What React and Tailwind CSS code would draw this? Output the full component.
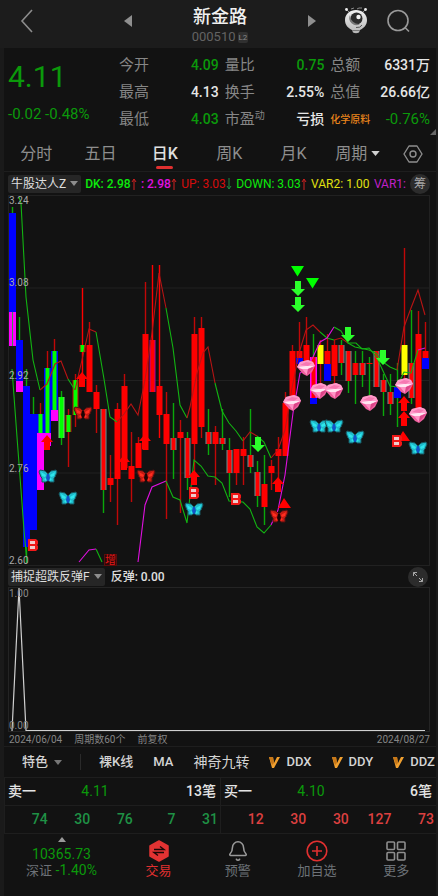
import React from "react";
import { Bell } from "lucide-react";

const RED = "#ff0000";
const GREEN = "#00ff00";
const BLUE = "#0000ff";
const PINK = "#ff00ff";
const YELLOW = "#ffff00";
const TEAL = "#5f9494";
const UP = "#c00808";
const DOWN = "#0aa80a";

// One entry per day: high, low, wick colour, then the body parts (top, bottom, fill, outline)
const candles = [
  [207, 346, DOWN, [213, 312, BLUE], [312, 346, PINK]],
  [317, 392, DOWN, [340, 381, BLUE], [381, 392, PINK]],
  [369, 563, DOWN, [386, 547, BLUE]],
  [397, 530, DOWN, [414, 530, BLUE]],
  [403, 490, UP, [414, 433, GREEN, BLUE], [433, 490, PINK]],
  [351, 450, UP, [368, 433, GREEN, BLUE], [433, 446, PINK]],
  [339, 421, UP, [351, 410, GREEN, BLUE], [410, 421, PINK]],
  [391, 445, DOWN, [397, 438, GREEN, "#7fd07f"]],
  [409, 467, UP, [415, 432, GREEN, UP]],
  [374, 427, UP, [380, 415, GREEN, UP]],
  [288, 378, RED, [345, 352, GREEN, UP]],
  [322, 392, UP, [345, 392, RED]],
  [385, 433, UP, [392, 409, RED]],
  [409, 513, DOWN, [409, 490, RED, TEAL]],
  [455, 502, UP, [478, 485, RED]],
  [403, 525, UP, [409, 479, RED]],
  [374, 468, UP, [386, 468, RED]],
  [432, 502, UP, [466, 479, RED]],
  [437, 468, UP, [443, 468, RED]],
  [282, 450, UP, [334, 450, RED]],
  [265, 392, RED, [340, 392, RED, "#b000a0"]],
  [265, 438, RED, [386, 415, RED]],
  [392, 519, UP, [414, 444, RED]],
  [403, 479, DOWN, [438, 450, RED, TEAL]],
  [420, 513, UP, [432, 438, RED]],
  [432, 490, DOWN, [438, 478, RED, TEAL]],
  [317, 480, UP, [334, 444, RED]],
  [317, 438, UP, [328, 427, RED]],
  [409, 455, DOWN, [432, 444, RED, TEAL]],
  [426, 485, UP, [432, 444, RED]],
  [409, 450, DOWN, [438, 444, RED, TEAL]],
  [438, 497, DOWN, [450, 473, RED, TEAL]],
  [449, 485, UP, [449, 473, RED]],
  [437, 485, UP, [449, 456, RED]],
  [409, 473, DOWN, [455, 467, RED, TEAL]],
  [461, 507, DOWN, [472, 496, RED, TEAL]],
  [455, 525, DOWN, [484, 507, RED]],
  [460, 490, UP, [466, 473, RED]],
  [437, 480, UP, [449, 456, RED]],
  [392, 456, UP, [403, 456, RED]],
  [345, 410, UP, [351, 400, RED]],
  [322, 364, UP, [351, 358, RED], [358, 364, BLUE]],
  [317, 365, UP, [345, 365, RED]],
  [334, 404, DOWN, [357, 398, RED, PINK], [398, 404, BLUE]],
  [340, 392, UP, [345, 364, YELLOW]],
  [334, 381, UP, [351, 364, RED], [364, 381, BLUE]],
  [340, 390, UP, [345, 376, RED]],
  [340, 375, DOWN, [345, 363, RED, TEAL]],
  [351, 393, DOWN, [351, 381, RED, TEAL]],
  [351, 404, DOWN, [363, 375, RED, UP]],
  [351, 387, DOWN, [363, 375, RED, TEAL]],
  [357, 400, DOWN, [363, 364, RED]],
  [351, 387, UP, [351, 387, RED, TEAL]],
  [374, 416, DOWN, [380, 392, RED, TEAL]],
  [374, 415, DOWN, [392, 404, RED, TEAL]],
  [363, 427, DOWN, [387, 398, BLUE]],
  [248, 385, UP, [345, 375, YELLOW]],
  [310, 404, DOWN, [363, 398, RED, TEAL]],
  [311, 416, UP, [334, 416, RED]],
  [322, 369, UP, [351, 358, RED], [358, 369, BLUE]],
];

const LINE_GREEN = "#12b412";
const LINE_RED = "#b81414";
const LINE_PINK = "#e010e0";

const curves = [
  [LINE_GREEN, "19,197 21,203 26,297 33,360 40,390"],
  [LINE_RED, "40,390 47,384 55,364 61,361 68,379"],
  [LINE_GREEN, "68,379 75,390"],
  [LINE_RED, "75,390 82,360 89,329 96,332"],
  [LINE_GREEN, "96,332 104,379 110,417 117,422"],
  [LINE_RED, "117,422 124,414 131,404 138,415 145,380 152,333 159,273 166,308"],
  [LINE_GREEN, "166,308 173,348 180,405 187,418"],
  [LINE_RED, "187,418 190,407 197,373 203,353 208,347 215,383"],
  [LINE_GREEN, "215,383 222,411 229,423 236,431 243,441"],
  [LINE_RED, "243,441 250,432 257,436"],
  [LINE_GREEN, "257,436 264,442 271,458"],
  [LINE_RED, "271,458 278,450 285,430 292,388 299,353 306,330 313,325 320,332"],
  [LINE_GREEN, "320,332 327,338 334,340"],
  [LINE_RED, "334,340 341,338 348,343"],
  [LINE_GREEN, "348,343 355,347 369,350 376,353 383,362 390,367 397,370"],
  [LINE_RED, "397,370 404,327 411,308 418,290 425,315"],
  [LINE_GREEN, "12,369 17,437 21,490 24,530 27,563"],
  [LINE_PINK, "79,562 89,550 96,549"],
  [LINE_GREEN, "96,549 102,562"],
  [LINE_PINK, "138,562 145,505 152,487 166,481"],
  [
    LINE_GREEN,
    "166,481 173,497 180,500 187,523 194,460 201,466 208,476 215,477 222,483 229,501 243,502 250,509 257,527 264,533 271,525",
  ],
  [LINE_PINK, "271,525 278,510 285,475 293,413 300,373 306,369 313,357 320,342 327,338 334,327"],
  [LINE_GREEN, "334,327 341,331 348,343 356,343 362,349 369,348 377,358 390,386 397,387 404,372 411,373 418,350"],
  [LINE_PINK, "418,350 425,348"],
];

const at = ([x, y]) => `translate(${x} ${y})`;

const UpArrow = ({ p }) => (
  <path transform={at(p)} d="M0 0L6 7H3V15H-3V7H-6Z" fill="#ff0000" />
);

const DownArrow = ({ p }) => (
  <path transform={at(p)} d="M0 15L7 8H3V0H-3V8H-7Z" fill="#2bff2b" />
);

const Gem = ({ p }) => (
  <g transform={at(p)}>
    <path d="M-9 -1L-6 -6L2 -8L7 -6L9 -2L6 4L1 8L-3 6Z" fill="#f0609f" />
    <path d="M-9 -1L-6 -6L2 -8L7 -6L9 -2L2 0L-5 1Z" fill="#ff9ccb" />
    <path d="M-6 -3L0 -6L6 -5L2 -2Z" fill="#f678b2" />
    <path d="M-8 -1L0 -2L8 -2L2 1L-4 1Z" fill="#ffe6f2" />
    <path d="M-4 1L2 1L1 7Z" fill="#ff94c6" />
    <path d="M2 1L8 -1L1 7Z" fill="#dc4488" />
  </g>
);

const Butterfly = ({ p, red }) => {
  const wing = red ? "#c41a12" : "#1fbccb";
  const edge = red ? "#4c1010" : "#17555e";
  const light = red ? "#ff2e20" : "#2fe6ec";
  const core = red ? "#1a0404" : "#1252c8";
  return (
    <g transform={at(p)}>
      <path
        d="M0 -2L-3 -5L-8 -6L-9 -4L-7 1L-6 2L-6 6L-2 6L0 4L2 6L6 6L6 2L7 1L9 -4L8 -6L3 -5Z"
        fill={wing}
        stroke={edge}
        strokeWidth="1"
      />
      <path d="M-7 -4L-2 -1L-3 1L-6 0ZM7 -4L2 -1L3 1L6 0ZM-4 3L-2 2L-2 5ZM4 3L2 2L2 5Z" fill={light} />
      <path d="M-1 -2H1L2 2L0 6L-2 2Z" fill={core} />
    </g>
  );
};

const BuyMark = ({ p }) => (
  <g transform={at(p)}>
    <path d="M-5 -6H3L5 -4V-1L4 0L5 1V4L3 6H-5Z" fill="#f01818" />
    <rect x="-3" y="-4" width="5" height="3" fill="#f0cccc" />
    <rect x="-3" y="1" width="5" height="3" fill="#f0cccc" />
  </g>
);

const CandleChart = () => (
  <svg viewBox="8 195 422 371" className="block w-full" role="img" aria-label="日K">
    <g stroke="#212121" strokeWidth="1">
      <path d="M8 195.5H430M8 288H430M8 380.5H430M8 473H430M8 565.5H430M8.5 195V566M429.5 195V566" />
    </g>
    {candles.map(([high, low, wick, ...parts], i) => {
      const x = Math.round(12.3 + i * 6.99) + 0.5;
      return (
        <g key={i}>
          <rect x={x - 0.7} y={high} width="1.4" height={low - high} fill={wick} />
          {parts.map(([top, bottom, fill, edge]) => {
            const wide = fill === BLUE || fill === PINK || edge === BLUE || edge === PINK;
            return (
              <g key={top}>
                <rect x={x - (wide ? 3.5 : 3)} y={top} width={wide ? 7 : 6} height={bottom - top} fill={edge || fill} />
                {edge && <rect x={x - 2} y={top} width="4" height={bottom - top} fill={fill} />}
              </g>
            );
          })}
        </g>
      );
    })}
    <path d="M12.5 312V346" stroke="#3f8f4f" />
    {curves.map(([color, points], i) => (
      <polyline key={i} points={points} fill="none" stroke={color} strokeWidth="1.1" />
    ))}
    {[[47, 435], [82, 372], [124, 455], [145, 434], [194, 470], [278, 477], [404, 396], [404, 411]].map((p) => (
      <UpArrow key={p} p={p} />
    ))}
    {[[298, 281], [298, 297], [348, 327], [258, 437], [383, 350]].map((p) => (
      <DownArrow key={p} p={p} />
    ))}
    <path d="M291 266H304L297.5 276.5ZM306 278H319L312.5 288.5Z" fill="#00ff00" />
    <path d="M284 498L291 508H278ZM403 431L410 441H397Z" fill="#ff0000" />
    {[[48, 476], [68, 498], [194, 509], [319, 426], [334, 426], [355, 437], [418, 448]].map((p) => (
      <Butterfly key={p} p={p} />
    ))}
    {[[83, 413], [146, 476], [279, 516]].map((p) => (
      <Butterfly key={p} p={p} red />
    ))}
    {[[33, 545], [194, 493], [236, 499], [397, 441]].map((p) => (
      <BuyMark key={p} p={p} />
    ))}
    {[[292, 403], [306, 368], [319, 391], [334, 391], [369, 403], [404, 386], [418, 415]].map((p) => (
      <Gem key={p} p={p} />
    ))}
    <rect x="104.5" y="554.5" width="12" height="11" fill="#2a0808" stroke="#5c0c0c" />
    <text x="105" y="564" fontSize="11" fill="#e01818">增</text>
    <g fontSize="10" fill="#a8a8a8">
      <text x="9" y="204">3.24</text>
      <text x="9" y="286">3.08</text>
      <text x="9" y="379">2.92</text>
      <text x="9" y="472">2.76</text>
      <text x="9" y="564">2.60</text>
    </g>
  </svg>
);

const ReboundChart = () => (
  <svg viewBox="8 587 422 145" className="block w-full" role="img" aria-label="反弹">
    <path d="M8 587.5H430M8.5 587V732M429.5 587V732M8 731.5H430" stroke="#242424" />
    <polyline points="12,731 19,588 26,730.5 425,730.5" fill="none" stroke="#d0d0d0" strokeWidth="1.2" />
    <g fontSize="10" fill="#8a8a8a">
      <text x="9" y="597">1.00</text>
      <text x="9" y="729">0.00</text>
    </g>
  </svg>
);

const Mascot = () => (
  <svg viewBox="0 0 24 28" className="h-7 w-6">
    <defs>
      <linearGradient id="head" x1="0" y1="0" x2="0" y2="1">
        <stop offset="0" stopColor="#f2f2f2" />
        <stop offset="1" stopColor="#b5b5b5" />
      </linearGradient>
    </defs>
    <path d="M3 3L6 6M21 3L18 6M7 2L10 1M13 2L15 1L18 1" stroke="#8a8a8a" strokeWidth="1" fill="none" />
    <circle cx="2.5" cy="2.5" r="1.4" fill="#eee" />
    <circle cx="21.5" cy="2.5" r="1.4" fill="#eee" />
    <path d="M12 3C18 3 23 7 23 13C23 18 20 21 16 23L15 25.5Q12 27 9 25.5L8 23C4 21 1 18 1 13C1 7 6 3 12 3Z" fill="url(#head)" />
    <circle cx="12.5" cy="11.5" r="6" fill="#2c2c2c" />
    <path d="M6 8A7 7 0 0 0 16 17A9 9 0 0 1 6 8Z" fill="#777" />
    <circle cx="14.5" cy="10" r="2.2" fill="#f4f4f4" />
    <path d="M12 20.5Q16.5 21 18 18" stroke="#555" strokeWidth="1" fill="none" />
    <path d="M8 23.5H16" stroke="#777" strokeWidth="1" />
  </svg>
);

const Header = () => (
  <header className="flex h-12 items-center bg-[#1c1c1c] pb-1.5">
    <div className="w-[120px] pl-5">
      <button aria-label="返回" className="block text-[#8c8c8c]">
        <svg viewBox="0 0 14 24" className="h-6 w-3.5" fill="none" stroke="currentColor" strokeWidth="1.6">
          <path d="M12 1L2 12L12 23" />
        </svg>
      </button>
    </div>
    <div className="flex flex-1 items-center justify-between px-1">
      <button aria-label="上一只">
        <svg viewBox="0 0 8 12" className="h-3 w-2"><path d="M8 0V12L0 6Z" fill="#8f8f8f" /></svg>
      </button>
      <div className="flex flex-col items-center pt-2">
        <h1 className="text-[18px] leading-6 font-medium text-[#f0f0f0]">新金路</h1>
        <div className="flex items-center gap-0.5 text-[13px] leading-4 text-[#636363]">
          000510
          <span className="h-[11px] rounded-xs bg-[#303030] px-px text-[8px] leading-[11px] text-[#888]">L2</span>
        </div>
      </div>
      <button aria-label="下一只">
        <svg viewBox="0 0 8 12" className="h-3 w-2"><path d="M0 0V12L8 6Z" fill="#8f8f8f" /></svg>
      </button>
    </div>
    <div className="flex w-[118px] items-center gap-[18px] pl-6">
      <button aria-label="助手"><Mascot /></button>
      <button aria-label="搜索" className="text-[#9a9a9a]">
        <svg viewBox="0 0 24 24" className="size-6" fill="none" stroke="currentColor" strokeWidth="1.6">
          <circle cx="12" cy="11.5" r="10" />
          <path d="M19 18.5L23 22.5" />
        </svg>
      </button>
    </div>
  </header>
);

const Stat = ({ label, sup, value, tone = "text-[#e6e6e6]" }) => (
  <div className="flex h-[27px] items-center justify-between">
    <span className="text-[15px] text-[#868686]">
      {label}
      {sup && <sup className="text-[10px]">{sup}</sup>}
    </span>
    <span className={`text-[14px] font-medium ${tone}`}>{value}</span>
  </div>
);

const price = "text-[#0b990b]";

const Quote = () => (
  <section className="relative flex h-[87px] gap-1.5 pt-1 pr-1.5 pl-1">
    <div className={`w-[105px] shrink-0 ${price}`}>
      <div className="mt-1 text-[30px] leading-[42px]">4.11</div>
      <div className="mt-1.5 text-[15px] leading-5 whitespace-nowrap">-0.02 -0.48%</div>
    </div>
    <div className="flex-1">
      <Stat label="今开" value="4.09" tone={price} />
      <Stat label="最高" value="4.13" />
      <Stat label="最低" value="4.03" tone={price} />
    </div>
    <div className="flex-1">
      <Stat label="量比" value="0.75" tone={price} />
      <Stat label="换手" value="2.55%" />
      <Stat label="市盈" sup="动" value="亏损" />
    </div>
    <div className="flex-1">
      <Stat label="总额" value="6331万" />
      <Stat label="总值" value="26.66亿" />
      <div className="flex h-[27px] items-center justify-between">
        <a href="#" className="text-[10px] font-medium text-[#e8841c]">化学原料</a>
        <span className={`text-[15px] ${price}`}>-0.76%</span>
      </div>
    </div>
    <svg viewBox="0 0 6 6" className="absolute right-0 bottom-0 size-1.5"><path d="M6 0V6H0Z" fill="#666" /></svg>
  </section>
);

const Caret = ({ className }) => (
  <svg viewBox="0 0 10 6" className={className}><path d="M0 0H10L5 6Z" fill="currentColor" /></svg>
);

const Tabs = () => (
  <nav className="flex h-[37px] border-b border-[#1e1e1e] text-[16px] text-[#8e8e8e]">
    {["分时", "五日", "日K", "周K", "月K"].map((tab) => (
      <button key={tab} className={`flex flex-1 flex-col items-center pt-1.5 leading-[25px] ${tab === "日K" ? "font-medium text-[#e0e0e0]" : ""}`}>
        {tab}
        {tab === "日K" && <span className="h-[3px] w-[17px] rounded-full bg-[#e03030]" />}
      </button>
    ))}
    <button className="flex flex-1 items-start justify-center pt-1.5 leading-[25px]">
      周期
      <Caret className="mt-2.5 ml-1 h-[5px] w-[9px] text-[#d0d0d0]" />
    </button>
    <button aria-label="设置" className="flex w-[46px] items-start justify-center pt-2.5">
      <svg viewBox="0 0 20 18" className="h-[18px] w-5" fill="none" stroke="#8e8e8e" strokeWidth="1.4">
        <path d="M6 1H14L19 9L14 17H6L1 9Z" strokeLinejoin="round" />
        <circle cx="10" cy="9" r="3" />
      </svg>
    </button>
  </nav>
);

const Trend = ({ down }) => (
  <svg viewBox="0 0 6 12" className="h-3 w-1.5 shrink-0" fill="none" stroke={down ? "#1f8a3f" : "#d02020"}>
    <path d={down ? "M3 0V11M1 8L3 11L5 8" : "M3 12V1M1 4L3 1L5 4"} />
  </svg>
);

const Picker = ({ children }) => (
  <button className="flex h-[18px] shrink-0 items-center gap-1 rounded-xs bg-[#262626] px-[3px] text-[12px] font-normal text-[#dedede]">
    {children}
    <Caret className="h-[5px] w-2 text-[#8e8e8e]" />
  </button>
);

const IndicatorBar = () => (
  <div className="flex h-[23px] items-center gap-1 px-1">
    <Picker>牛股达人Z</Picker>
    <div className="flex min-w-0 flex-1 items-center justify-between text-[12px] font-medium whitespace-nowrap">
      <span className="flex items-center text-[#0cea0c]">DK: 2.98<Trend /></span>
      <span className="flex items-center text-[#e010e0]">: 2.98<Trend /></span>
      <span className="flex items-center font-normal text-[#d80c0c]">UP: 3.03<Trend down /></span>
      <span className="flex items-center font-normal text-[#0cea0c]">DOWN: 3.03<Trend /></span>
      <span className="font-normal text-[#e0e010]">VAR2: 1.00</span>
      <span className="font-normal text-[#c020c8]">VAR1:</span>
    </div>
    <button className="mr-0.5 size-5 shrink-0 rounded-full bg-[#2c2c2c] text-[12px] leading-5 text-[#a8a8a8]">筹</button>
  </div>
);

const VMark = () => (
  <svg viewBox="0 0 11 12" className="h-3 w-[11px]">
    <path d="M0 1H4L5 7L8 1H11L5 12H3Z" fill="#f0a030" />
    <path d="M0 1H4L5 7L3 9Z" fill="#c87818" />
  </svg>
);

const Features = () => (
  <div className="flex h-8 items-center overflow-hidden border-y border-[#1e1e1e] pl-[18px] text-[13px] whitespace-nowrap text-[#d4d4d4]">
    <button className="flex items-center gap-1.5 font-medium">
      特色
      <Caret className="h-[5px] w-2 text-[#777]" />
    </button>
    <span className="ml-[18px] h-4 w-px bg-[#2a2a2a]" />
    <div className="ml-[18px] flex flex-1 items-center justify-between pr-px font-medium">
      <button>裸K线</button>
      <button>MA</button>
      <button className="text-[14px] font-normal">神奇九转</button>
      {["DDX", "DDY", "DDZ"].map((name) => (
        <button key={name} className="flex items-center gap-1.5"><VMark />{name}</button>
      ))}
    </div>
  </div>
);

const BookSide = ({ side, level, count, tone, orders }) => (
  <div className="flex-1 border-l border-[#1e1e1e]">
    <div className="grid h-7 grid-cols-3 items-center border-b border-[#1e1e1e] pr-1 pl-[3px] text-[14px] font-medium text-[#e4e4e4]">
      <span>{side}</span>
      <span className={`pl-1 font-normal ${price}`}>{level}</span>
      <span className="text-right">{count}笔</span>
    </div>
    <div className={`grid h-7 grid-cols-5 items-center border-b border-[#1e1e1e] pr-0.5 text-right text-[14px] font-medium ${tone}`}>
      {orders.map((n, i) => <span key={i}>{n}</span>)}
    </div>
  </div>
);

const NavItem = ({ label, active, children }) => (
  <button className={`flex flex-1 flex-col items-center pt-1.5 text-[13px] leading-[18px] ${active ? "text-[#e03030]" : "text-[#6d7278]"}`}>
    <span className="flex h-[22px] items-center">{children}</span>
    {label}
  </button>
);

const BottomNav = () => (
  <nav className="flex h-[62px]">
    <button className={`flex w-[115px] flex-col items-center pt-[3px] ${price}`}>
      <svg viewBox="0 0 8 5" className="h-[5px] w-2"><path d="M4 0L8 5H0Z" fill="#999" /></svg>
      <span className="mt-1 text-[14px] leading-4">10365.73</span>
      <span className="text-[14px] leading-4"><span className="text-[13px] text-[#6d7278]">深证</span> -1.40%</span>
    </button>
    <NavItem label="交易" active>
      <svg viewBox="0 0 20 22" className="h-[22px] w-5">
        <path d="M10 1L19 6V16L10 21L1 16V6Z" fill="#e23333" stroke="#e23333" strokeWidth="1.5" strokeLinejoin="round" />
        <path d="M5 9.5H15L11 6.5M15 12.5H5L9 15.5" fill="none" stroke="#1a0808" strokeWidth="1.4" />
      </svg>
    </NavItem>
    <NavItem label="预警"><Bell size={22} strokeWidth={1.7} color="#999" /></NavItem>
    <NavItem label="加自选">
      <svg viewBox="0 0 22 22" className="size-[22px]" fill="none" stroke="#e03030" strokeWidth="1.6">
        <circle cx="11" cy="11" r="9.8" />
        <path d="M6 11H16M11 6V16" />
      </svg>
    </NavItem>
    <NavItem label="更多">
      <svg viewBox="0 0 20 20" className="size-5" fill="none" stroke="#8e8e8e" strokeWidth="1.6">
        <rect x="1" y="1" width="7.5" height="7.5" rx="1" />
        <rect x="11.5" y="1" width="7.5" height="7.5" rx="1" />
        <rect x="1" y="11.5" width="7.5" height="7.5" rx="1" />
        <rect x="11.5" y="11.5" width="7.5" height="7.5" rx="1" />
      </svg>
    </NavItem>
  </nav>
);

const App = () => {
  return (
    <div className="flex min-h-screen flex-col bg-[#121212] font-['Roboto','Noto_Sans_CJK_SC',sans-serif]">
      <Header />
      <div className="flex-1 border-r-2 border-l-4 border-r-[#1a1a1a] border-l-[#1a1a1a]">
        <Quote />
        <Tabs />
        <IndicatorBar />
        <div className="pr-1.5 pl-1"><CandleChart /></div>
        <div className="flex h-[21px] items-center gap-1.5 pr-2 pl-1 text-[12px] font-medium text-[#e0e0e0]">
          <Picker>捕捉超跌反弹F</Picker>
          <span className="flex-1">反弹: 0.00</span>
          <button aria-label="展开" className="flex size-5 items-center justify-center rounded-full bg-[#2c2c2c]">
            <svg viewBox="0 0 12 12" className="size-3" fill="none" stroke="#a8a8a8">
              <path d="M5 5L1.5 1.5M1.5 5V1.5H5M7 7L10.5 10.5M10.5 7V10.5H7" />
            </svg>
          </button>
        </div>
        <div className="pr-1.5 pl-1"><ReboundChart /></div>
        <div className="flex h-3.5 items-center gap-3 pr-1.5 pl-[5px] text-[10px] text-[#858585]">
          <span>2024/06/04</span>
          <span>周期数60个</span>
          <span>前复权</span>
          <span className="ml-auto">2024/08/27</span>
        </div>
        <Features />
        <div className="flex">
          <BookSide side="卖一" level="4.11" count={13} tone="text-[#1f9145]" orders={[74, 30, 76, 7, 31]} />
          <BookSide side="买一" level="4.10" count={6} tone="text-[#dc4040]" orders={[12, 30, 30, 127, 73]} />
        </div>
        <BottomNav />
      </div>
    </div>
  );
};

export default App;
